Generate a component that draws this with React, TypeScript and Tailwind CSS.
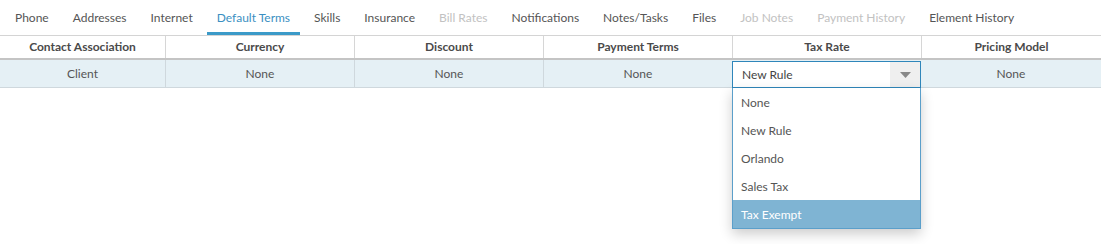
const tabs = [
  { label: "Phone" },
  { label: "Addresses" },
  { label: "Internet" },
  { label: "Default Terms", active: true },
  { label: "Skills" },
  { label: "Insurance" },
  { label: "Bill Rates", disabled: true },
  { label: "Notifications" },
  { label: "Notes/Tasks" },
  { label: "Files" },
  { label: "Job Notes", disabled: true },
  { label: "Payment History", disabled: true },
  { label: "Element History" },
];

const columns = ["Contact Association", "Currency", "Discount", "Payment Terms", "Tax Rate", "Pricing Model"];
const options = ["None", "New Rule", "Orlando", "Sales Tax", "Tax Exempt"];

const GRID = "grid grid-cols-[165px_189px_189px_189px_189px_1fr]";

export default function App() {
  return (
    <div className="h-[244px] w-[1101px] bg-white font-['Lato','Liberation_Sans',sans-serif] text-[12px] text-[#555]">
      {/* tabs */}
      <div className="flex h-[35px] items-stretch gap-[4px] pl-[5px]">
        {tabs.map((t) => (
          <div
            key={t.label}
            className={`flex items-center border-b-[3px] px-[10px] pt-[4px] ${
              t.active
                ? "border-[#3b9ac8] text-[#3b8fc2]"
                : t.disabled
                ? "border-transparent text-[#c2c2c2]"
                : "border-transparent text-[#555]"
            }`}
          >
            {t.label}
          </div>
        ))}
      </div>

      {/* table */}
      <div className="border-t border-[#d4d4d4]">
        <div className={`${GRID} h-[24px] border-b-2 border-[#c4c4c4] font-bold text-[#4a4a4a]`}>
          {columns.map((c, i) => (
            <div key={c} className={`flex items-center justify-center ${i > 0 ? "border-l border-[#d6d6d6]" : ""}`}>
              {c}
            </div>
          ))}
        </div>
        <div className={`${GRID} h-[28px] border-b border-[#cfd8dd] bg-[#e5f0f5]`}>
          <Cell>Client</Cell>
          <Cell border>None</Cell>
          <Cell border>None</Cell>
          <Cell border>None</Cell>
          <div className="relative pt-[1px]">
            <div className="flex h-[27px] items-center border border-[#2f86ba] bg-white">
              <span className="flex-1 pl-[9px] text-[#444]">New Rule</span>
              <span className="flex h-full w-[30px] items-center justify-center bg-[#efefef]">
                <svg width="11" height="6" viewBox="0 0 11 6">
                  <path d="M0 0 H11 L5.5 6 Z" fill="#888" />
                </svg>
              </span>
            </div>
            <div className="absolute left-0 right-0 top-[28px] z-10 border border-t-0 border-[#5b9fca] bg-white shadow-[0_5px_12px_rgba(0,0,0,0.2)]">
              {options.map((o, i) => (
                <div
                  key={o}
                  className={`flex h-[28px] items-center pl-[8px] pt-[1px] ${
                    i === options.length - 1 ? "bg-[#7fb4d3] text-white" : "text-[#555]"
                  }`}
                >
                  {o}
                </div>
              ))}
            </div>
          </div>
          <Cell>None</Cell>
        </div>
      </div>
    </div>
  );
}

function Cell({ children, border }: { children: React.ReactNode; border?: boolean }) {
  return (
    <div className={`flex items-center justify-center ${border ? "border-l border-[#cfd8dd]" : ""}`}>{children}</div>
  );
}
